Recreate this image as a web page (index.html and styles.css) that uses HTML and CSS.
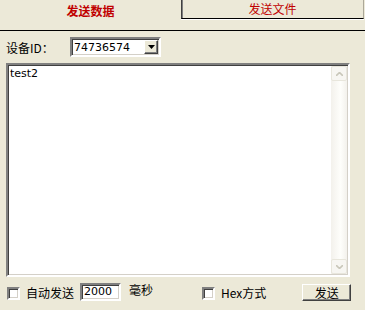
FILE: index.html
```html
<!DOCTYPE html>
<html lang="zh-CN">
<head>
    <meta charset="UTF-8">
    <title>发送数据</title>
    <link rel="stylesheet" href="styles.css">
</head>
<body>

<!-- Onglets en haut -->
<div class="tabs">
    <div class="tab tab-active">发送数据</div>
    <div class="tab tab-other">发送文件</div>
</div>

<div class="panel">
    <!-- Choix du périphérique -->
    <div class="id-row">
        <span class="label">设备ID：</span>
        <div class="combo">
            <span class="combo-value">74736574</span>
            <span class="combo-btn">
                <svg width="7" height="4" viewBox="0 0 7 4"><path d="M0 0h7L3.5 4z" fill="#000"/></svg>
            </span>
        </div>
    </div>

    <!-- Zone de texte -->
    <div class="memo">
        <div class="memo-text">test2</div>
        <div class="vscroll">
            <div class="sb-btn">
                <svg width="7" height="4" viewBox="0 0 7 4"><path d="M0 4L3.5 0.5L7 4" fill="none" stroke="#c9c7ba" stroke-width="1.6"/></svg>
            </div>
            <div class="sb-track"></div>
            <div class="sb-btn">
                <svg width="7" height="4" viewBox="0 0 7 4"><path d="M0 0L3.5 3.5L7 0" fill="none" stroke="#c9c7ba" stroke-width="1.6"/></svg>
            </div>
        </div>
    </div>

    <!-- Ligne du bas -->
    <div class="bottom-row">
        <span class="check"></span>
        <span class="txt auto-label">自动发送</span>
        <span class="edit">2000</span>
        <span class="txt ms-label">毫秒</span>
        <span class="check hex-check"></span>
        <span class="txt">Hex方式</span>
        <button class="send-btn">发送</button>
    </div>
</div>

</body>
</html>
```

FILE: styles.css
```css
html, body {
    margin: 0;
    padding: 0;
}

body {
    width: 365px;
    height: 310px;
    background-color: #ece9d8;
    font-family: "Noto Sans CJK SC", "DejaVu Sans", sans-serif;
    font-size: 12px;
    color: #000;
    overflow: hidden;
}

/* Onglets */
.tabs {
    display: flex;
    height: 30px;
    border-bottom: 1px solid #000;
}

.tab {
    color: #c00000;
    text-align: center;
}

.tab-active {
    width: 181px;
    padding-top: 4px;
    line-height: 14px;
    font-weight: bold;
}

.tab-other {
    width: 181px;
    height: 17px;
    padding-top: 1px;
    line-height: 15px;
    border-left: 1px solid #404040;
    border-right: 1px solid #aca899;
    border-bottom: 1px solid #000;
    box-shadow: inset 1px 0 0 #808080, 0 1px 0 #fff;
}

.panel {
    padding: 6px 0 0 6px;
}

/* Ligne ID */
.id-row {
    display: flex;
    align-items: center;
    height: 20px;
}

.label {
    width: 64px;
}

.combo {
    display: flex;
    align-items: center;
    width: 87px;
    height: 16px;
    background: #fff;
    border: 2px solid;
    border-color: #808080 #fff #fff #808080;
    box-shadow: inset 1px 1px 0 #404040, inset -1px -1px 0 #d4d0c8;
}

.combo-value {
    flex: 1;
    padding-left: 2px;
    font-family: "DejaVu Sans", sans-serif;
    font-size: 11px;
}

.combo-btn {
    display: flex;
    align-items: center;
    justify-content: center;
    width: 14px;
    height: 14px;
    margin-right: 1px;
    background: #ece9d8;
    border: 1px solid;
    border-color: #fff #404040 #404040 #fff;
    box-sizing: border-box;
    box-shadow: inset -1px -1px 0 #808080;
}

/* Zone de texte */
.memo {
    display: flex;
    width: 340px;
    height: 210px;
    margin-top: 6px;
    background: #fff;
    border: 2px solid;
    border-color: #808080 #fff #fff #808080;
    box-shadow: inset 1px 1px 0 #404040, inset -1px -1px 0 #d4d0c8;
}

.memo-text {
    flex: 1;
    padding: 3px 0 0 2px;
    font-family: "DejaVu Sans", sans-serif;
    font-size: 11px;
    line-height: 12px;
}

.vscroll {
    display: flex;
    flex-direction: column;
    width: 16px;
    margin: 1px 1px 1px 0;
    background: linear-gradient(to right, #f3f1ec, #fefefb 60%, #f3f1ec);
}

.sb-btn {
    display: flex;
    align-items: center;
    justify-content: center;
    height: 15px;
    border: 1px solid #e8e6dc;
    border-radius: 2px;
    background: #f7f6f2;
    box-sizing: border-box;
}

.sb-track {
    flex: 1;
}

/* Ligne du bas */
.bottom-row {
    display: flex;
    align-items: center;
    height: 18px;
    margin-top: 6px;
}

.check {
    width: 9px;
    height: 9px;
    margin: 2px 6px 0 1px;
    background: #fff;
    border: 2px solid;
    border-color: #808080 #fff #fff #808080;
    box-shadow: inset 1px 1px 0 #404040, inset -1px -1px 0 #d4d0c8;
}

.txt {
    line-height: 12px;
    margin-top: 2px;
}

.auto-label {
    width: 54px;
}

.edit {
    width: 35px;
    height: 14px;
    padding-left: 2px;
    background: #fff;
    border: 2px solid;
    border-color: #808080 #fff #fff #808080;
    box-shadow: inset 1px 1px 0 #404040, inset -1px -1px 0 #d4d0c8;
    font-family: "DejaVu Sans", sans-serif;
    font-size: 11px;
    line-height: 14px;
}

.ms-label {
    width: 73px;
    margin-left: 8px;
    margin-top: -4px;
}

.hex-check {
    margin-left: 0;
}

.send-btn {
    width: 49px;
    height: 17px;
    margin-left: 36px;
    padding: 0;
    background: #ece9d8;
    border: 1px solid;
    border-color: #fff #404040 #404040 #fff;
    box-shadow: inset -1px -1px 0 #808080;
    font-family: "Noto Sans CJK SC", sans-serif;
    font-size: 12px;
    line-height: 13px;
    color: #000;
}
```
